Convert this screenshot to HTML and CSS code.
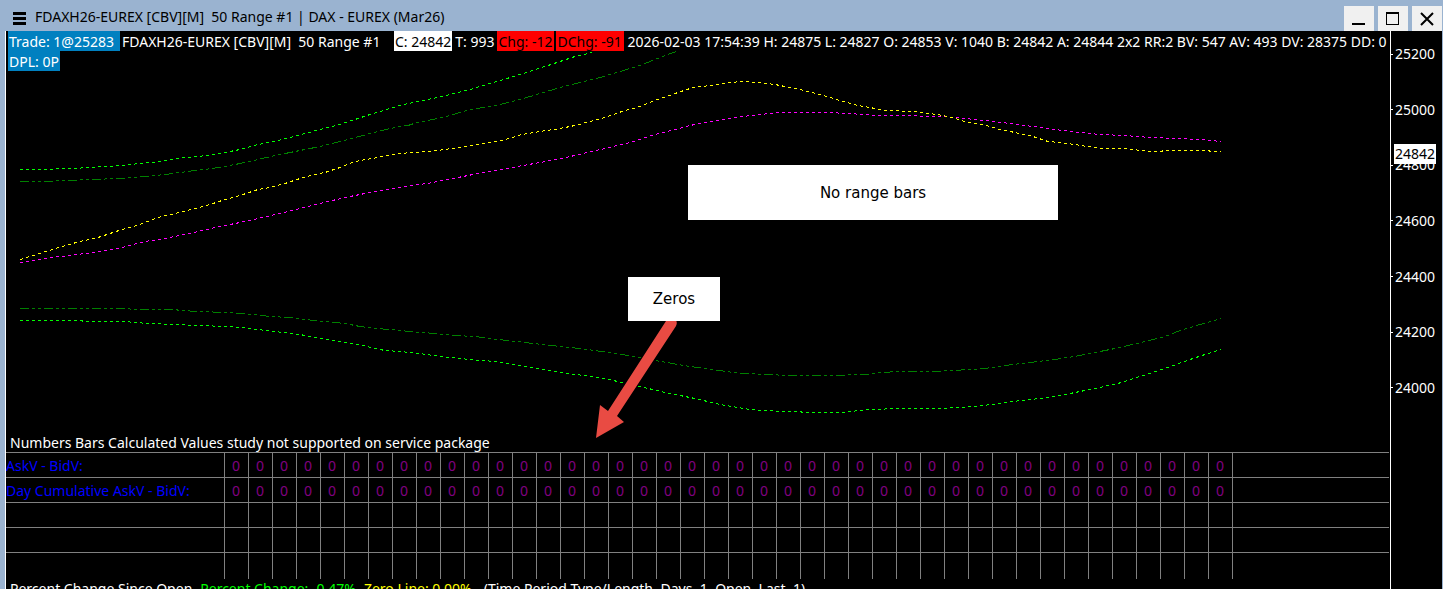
FILE: index.html
```
<!DOCTYPE html>
<html lang="en">
<head>
<meta charset="utf-8">
<title>FDAXH26-EUREX 50 Range #1</title>
<link rel="stylesheet" href="styles.css">
</head>
<body>
<header class="titlebar">
  <button class="menu" aria-label="Menu"><svg width="13" height="13" viewBox="0 0 13 13"><path d="M0 1.5h13M0 6.5h13M0 11.5h13" stroke="#000" stroke-width="3"/></svg></button>
  <h1 class="title">FDAXH26-EUREX [CBV][M]&nbsp; 50 Range #1 | DAX - EUREX (Mar26)</h1>
  <div class="controls">
    <button class="control" aria-label="Minimize"><svg width="14" height="14" viewBox="0 0 14 14"><path d="M0 12h13" stroke="#000" stroke-width="2"/></svg></button>
    <button class="control" aria-label="Maximize"><svg width="14" height="14" viewBox="0 0 14 14" shape-rendering="crispEdges"><path d="M0 1h13" stroke="#000" stroke-width="2"/><path d="M.5 1v11.500h12v-11.500" fill="none" stroke="#000"/></svg></button>
    <button class="control" aria-label="Close"><svg width="14" height="14" viewBox="0 0 14 14"><path d="M1 1l12 12M13 1l-12 12" stroke="#000" stroke-width="2"/></svg></button>
  </div>
</header>
<main class="window">
  <section class="plot">
    <div class="chart">
      <svg class="curves" viewBox="6 31 1384 421" preserveAspectRatio="none" shape-rendering="crispEdges">
        <defs>
          <pattern id="lime" patternUnits="userSpaceOnUse" x="20" y="0" width="6" height="6"><path d="M0 0h3v6h-3z" fill="#0f0"/></pattern>
          <pattern id="yellow" patternUnits="userSpaceOnUse" x="20" y="0" width="6" height="6"><path d="M0 0h3v6h-3z" fill="#ff0"/></pattern>
          <pattern id="magenta" patternUnits="userSpaceOnUse" x="20" y="0" width="6" height="6"><path d="M0 0h3v6h-3z" fill="#f0f"/></pattern>
          <pattern id="green" patternUnits="userSpaceOnUse" x="20" y="0" width="24" height="6"><path d="M0 0h9v6h-9zM12 0h3v6h-3zM18 0h3v6h-3z" fill="#008000"/></pattern>
        </defs>
        <g fill="none" transform="translate(0 .5)">
          <polyline stroke="url(#lime)" points="20,169 52,169 57,168 75,168 87,167 105,166 122,165 140,163 152,162 165,160 178,158 195,156 210,155 225,152 240,149 258,144 274,141 290,137 305,133 320,129 336,125 352,120 370,114 390,108 400,105 417,101 433,98 450,94 470,89 483,85 497,81 520,74 545,66 560,61 575,56 592,52"/>
          <polyline stroke="url(#green)" points="20,181 52,181 60,180 76,180 83,179 100,179 110,178 122,178 132,177 145,176 165,174 180,172 195,170 212,168 225,166 240,163 258,159 275,155 290,152 305,149 320,146 336,142 352,138 370,133 386,129 400,126 408,125 417,122 433,119 450,115 470,109 483,107 500,104 520,99 540,93 560,87 580,82 600,77 620,71 640,65 660,57 676,51"/>
          <polyline stroke="url(#magenta)" points="20,262 35,260 52,257 70,255 85,253 100,251 122,247 145,241 165,238 190,233 215,227 240,222 258,218 280,213 300,208 320,203 345,197 370,192 400,187 433,182 463,176 483,172 512,167 540,162 562,158 583,153 605,148 630,142 655,134 675,129 690,125 710,121 735,117 760,114 780,112 825,112 850,113 875,115 910,115 923,116 945,116 965,118 985,120 1010,123 1033,126 1055,129 1080,132 1100,134 1125,135 1150,137 1180,138 1200,139 1221,141"/>
          <polyline stroke="url(#yellow)" points="20,259 30,256 46,251 62,246 80,241 98,237 110,233 122,229 140,224 158,217 175,213 195,208 210,204 225,199 240,195 258,189 270,187 285,183 300,178 315,174 325,172 340,167 355,161 372,158 388,155 400,153 412,152 430,151 445,149 465,146 483,143 502,140 512,137 522,134 540,131 560,128 575,125 590,121 605,117 622,111 640,106 655,100 675,93 693,87 710,85 730,82 743,81 758,82 775,84 800,89 820,94 840,100 858,105 870,107 885,110 912,111 930,113 943,115 955,118 965,121 983,124 1000,129 1015,132 1033,136 1048,141 1060,142 1075,144 1100,148 1127,148 1140,150 1150,151 1160,151 1165,150 1208,150 1211,151 1221,151"/>
          <polyline stroke="url(#green)" points="20,308 128,308 132,309 175,309 180,310 200,311 225,312 240,313 255,314 270,316 290,317 305,319 325,321 345,323 360,326 375,328 390,329 410,331 435,333 455,335 475,336 490,338 560,346 580,348 602,351 635,356 655,360 690,366 720,370 740,373 770,374 785,375 845,375 850,374 865,374 880,372 900,371 935,371 952,370 970,369 985,368 1005,365 1030,362 1055,359 1080,355 1100,351 1120,347 1145,341 1165,336 1180,330 1200,324 1221,318"/>
          <polyline stroke="url(#lime)" points="20,320 80,320 85,321 128,321 132,322 152,323 175,324 200,325 225,326 240,327 258,329 275,331 300,334 320,338 345,342 360,344 375,348 385,350 400,351 420,353 440,356 460,358 480,360 497,361 560,372 600,377 622,382 640,386 665,392 695,398 720,404 750,409 780,411 800,411 803,412 840,412 850,411 870,409 900,408 940,408 960,407 975,406 1000,403 1020,400 1050,397 1065,394 1090,389 1118,383 1140,376 1165,368 1190,359 1205,354 1221,349"/>
        </g>
        <path shape-rendering="auto" fill="#e94b43" d="M666 321 L675 319 Q678 322 676 326 L617 416 L624 422 L596 438 L600 405 L608 411 Z"/>
      </svg>
      <div class="status">
        <div class="line"><span class="tag blue trade">Trade: 1@25283&nbsp;</span><span class="symbol">FDAXH26-EUREX [CBV][M]&nbsp; 50 Range #1</span><span class="tag white">C: 24842</span><span class="tag trades">T: 993</span><span class="tag red change-bar">Chg: -12</span><span class="tag red change-day">DChg: -91</span><span class="tag">2026-02-03 17:54:39 H: 24875 L: 24827 O: 24853 V: 1040 B: 24842 A: 24844 2x2 RR:2 BV: 547 AV: 493 DV: 28375 DD: 0</span></div>
        <div class="line"><span class="tag blue">DPL: 0P</span></div>
      </div>
      <div class="note bars">No range bars</div>
      <div class="note zeros">Zeros</div>
      <p class="message">Numbers Bars Calculated Values study not supported on service package</p>
    </div>
    <table class="values"><tbody id="rows"></tbody></table>
    <p class="percent"><span>Percent Change Since Open</span><span class="change">Percent Change: -0.47%</span><span class="zero">Zero Line: 0.00%</span><span class="period">(Time Period Type/Length, Days, 1, Open, Last, 1)</span></p>
  </section>
  <aside class="axis">
    <ul class="scale"><li>25200</li><li>25000</li><li>24800</li><li>24600</li><li>24400</li><li>24200</li><li>24000</li></ul>
    <span class="price">24842</span>
  </aside>
</main>
<script src="table.js"></script>
</body>
</html>
```
FILE: styles.css
```
* { box-sizing: border-box; margin: 0; padding: 0; }
body {
  height: 100vh;
  display: flex;
  flex-direction: column;
  overflow: hidden;
  background: #9ab3d0;
  color: #fff;
  font: 14px/20px "Noto Sans", "Open Sans", sans-serif;
  white-space: nowrap;
}
button { border: 0; background: none; font: inherit; }
svg { display: block; }
.titlebar { flex: none; display: flex; align-items: center; height: 31px; padding: 3px 1px 0 13px; color: #000; }
.title { flex: 1; padding-left: 9px; font-size: 14px; font-weight: 400; }
.menu { padding-top: 3px; }
.controls { display: flex; align-self: flex-end; gap: 4px; }
.control { width: 30px; height: 25px; display: grid; place-items: center; background: #f0f0f0; }
.window { flex: 1; min-height: 0; display: flex; margin: 0 1px 0 5px; border-left: 1px solid #fff; background: #000; }
.plot { flex: 1; min-width: 0; overflow: hidden; }
.chart { position: relative; height: 421px; display: flex; flex-direction: column; }
.curves { position: absolute; width: 100%; height: 100%; }
.status { flex: 1; position: relative; padding-left: 2px; }
.line { display: flex; gap: 2px; overflow: hidden; }
.line > span { flex: none; height: 20px; line-height: 22px; }
.tag { padding: 0 1px; }
.blue { background: #0080c0; }
.white { background: #fff; color: #000; }
.red { background: #f00; color: #000; }
.trade { min-width: 112px; }
.symbol { min-width: 270px; }
.trades { min-width: 41px; }
.change-bar { min-width: 57px; }
.change-day { min-width: 68px; }
.note { position: absolute; display: grid; place-items: center; background: #fff; color: #000; font: 15px/20px "DejaVu Sans", Verdana, sans-serif; }
.bars { left: 682px; top: 134px; width: 370px; height: 55px; }
.zeros { left: 622px; top: 246px; width: 92px; height: 44px; }
.message { position: relative; padding-left: 4px; line-height: 18px; }
.values { width: calc(100% - 1px); table-layout: fixed; border-collapse: collapse; }
.values tr { height: 25px; border-top: 1px solid #808080; }
.values tr:last-child { height: 26px; }
.values th { width: 218px; padding-top: 2px; text-align: left; font-weight: 400; color: #00f; }
.values td { padding-top: 2px; border-left: 1px solid #808080; text-align: center; color: #800080; }
.values .cell { width: 24px; }
.percent { display: flex; gap: 8px; padding-left: 4px; }
.change { color: #0f0; }
.zero { color: #ff0; }
.period { padding-left: 4px; }
.axis { flex: none; position: relative; width: 52px; border-left: 1px solid #fff; }
.scale { list-style: none; height: 354px; margin-top: 13px; display: flex; flex-direction: column; justify-content: space-between; }
.scale li { display: flex; align-items: center; gap: 2px; }
.scale li::before { content: ""; width: 2px; height: 1px; background: #fff; }
.price { position: absolute; left: 3px; top: 113px; padding: 0 1px; background: #fff; color: #000; }
```
FILE: table.js
```
const BAR_COUNT = 42;
const rows = [
  { label: "AskV - BidV:", value: "0" },
  { label: "Day Cumulative AskV - BidV:", value: "0" },
  { label: "", value: "" },
  { label: "", value: "" },
  { label: "", value: "" }
];
const body = document.getElementById("rows");
for (const row of rows) {
  const tr = body.insertRow();
  const th = document.createElement("th");
  th.scope = "row";
  th.textContent = row.label;
  tr.append(th);
  for (let i = 0; i < BAR_COUNT; i++) {
    const cell = tr.insertCell();
    cell.className = "cell";
    cell.textContent = row.value;
  }
  tr.insertCell();
}
```
